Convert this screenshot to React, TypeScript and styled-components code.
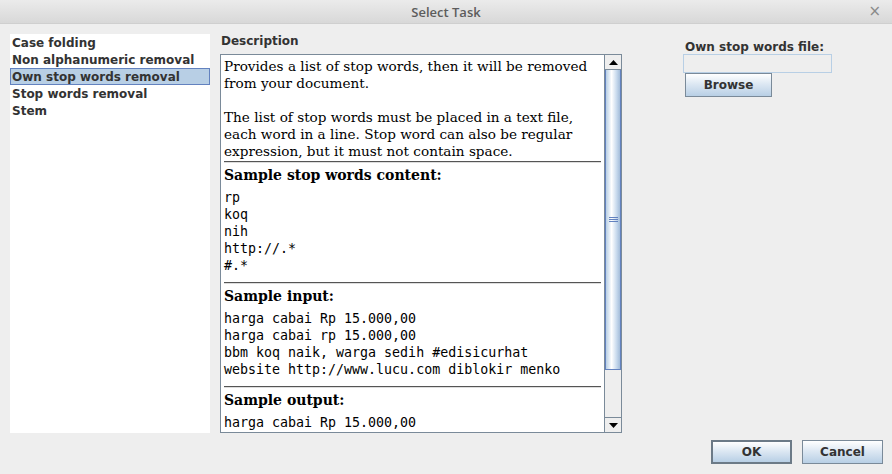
import styled, { createGlobalStyle } from "styled-components";

const GlobalStyle = createGlobalStyle`
  html, body {
    margin: 0;
    padding: 0;
    background: #eeeeee;
    width: 892px;
    height: 474px;
    overflow: hidden;
  }
`;

const tasks = [
  "Case folding",
  "Non alphanumeric removal",
  "Own stop words removal",
  "Stop words removal",
  "Stem",
];

export default function App() {
  return (
    <>
      <GlobalStyle />
      <Window>
        <TitleBar>
          <Title>Select Task</Title>
          <Close>×</Close>
        </TitleBar>
        <Body>
          <TaskList>
            {tasks.map((t) => (
              <TaskItem key={t} selected={t === "Own stop words removal"}>
                {t}
              </TaskItem>
            ))}
          </TaskList>
          <Middle>
            <Label>Description</Label>
            <Pane>
              <Doc>
                <P>
                  Provides a list of stop words, then it will be removed from
                  your document.
                </P>
                <P>
                  The list of stop words must be placed in a text file, each
                  word in a line. Stop word can also be regular expression, but
                  it must not contain space.
                </P>
                <Rule />
                <H>Sample stop words content:</H>
                <Pre>{"rp\nkoq\nnih\nhttp://.*\n#.*"}</Pre>
                <Rule />
                <H>Sample input:</H>
                <Pre>
                  {
                    "harga cabai Rp 15.000,00\nharga cabai rp 15.000,00\nbbm koq naik, warga sedih #edisicurhat\nwebsite http://www.lucu.com diblokir menko"
                  }
                </Pre>
                <Rule />
                <H>Sample output:</H>
                <Pre>{"harga cabai Rp 15.000,00"}</Pre>
              </Doc>
              <ScrollBar>
                <ArrowButton>
                  <svg width="9" height="5" viewBox="0 0 9 5">
                    <path d="M0 5 L4.5 0 L9 5 Z" fill="#000" />
                  </svg>
                </ArrowButton>
                <Track>
                  <Thumb>
                    <Grip />
                  </Thumb>
                </Track>
                <ArrowButton>
                  <svg width="9" height="5" viewBox="0 0 9 5">
                    <path d="M0 0 L4.5 5 L9 0 Z" fill="#000" />
                  </svg>
                </ArrowButton>
              </ScrollBar>
            </Pane>
          </Middle>
          <Side>
            <SideLabel>Own stop words file:</SideLabel>
            <FileField />
            <Button>Browse</Button>
          </Side>
        </Body>
        <Footer>
          <Button wide primary>
            OK
          </Button>
          <Button wide>Cancel</Button>
        </Footer>
      </Window>
    </>
  );
}

const Window = styled.div`
  width: 892px;
  height: 474px;
  display: flex;
  flex-direction: column;
  background: #eeeeee;
`;

const TitleBar = styled.div`
  height: 24px;
  flex: none;
  display: flex;
  align-items: center;
  justify-content: center;
  position: relative;
  background: linear-gradient(#ebebeb, #d8d8d8);
  border-bottom: 1px solid #cfcfcf;
  box-sizing: border-box;
`;

const Title = styled.div`
  font-family: "Open Sans", "Noto Sans", sans-serif;
  font-weight: 600;
  font-size: 13px;
  color: #5c5c5c;
`;

const Close = styled.div`
  position: absolute;
  right: 11px;
  top: 2px;
  font-family: "DejaVu Sans", sans-serif;
  font-size: 15px;
  color: #8a8a8a;
`;

const Body = styled.div`
  display: flex;
  padding: 10px 0 0 10px;
  height: 399px;
`;

const TaskList = styled.div`
  width: 200px;
  height: 399px;
  background: #ffffff;
  display: flex;
  flex-direction: column;
`;

const TaskItem = styled.div<{ selected?: boolean }>`
  height: 17px;
  line-height: 16px;
  box-sizing: border-box;
  padding-left: 1px;
  font-family: "DejaVu Sans", sans-serif;
  font-weight: bold;
  font-size: 12px;
  color: #333333;
  background: ${(p) => (p.selected ? "#b8cfe5" : "transparent")};
  border: 1px solid ${(p) => (p.selected ? "#6382bf" : "transparent")};
`;

const Middle = styled.div`
  margin-left: 10px;
  width: 402px;
  display: flex;
  flex-direction: column;
`;

const Label = styled.div`
  height: 20px;
  padding-left: 1px;
  font-family: "DejaVu Sans", sans-serif;
  font-weight: bold;
  font-size: 12px;
  line-height: 14px;
  color: #333333;
`;

const Pane = styled.div`
  height: 379px;
  box-sizing: border-box;
  border: 1px solid #7a8a99;
  background: #ffffff;
  display: flex;
  overflow: hidden;
`;

const Doc = styled.div`
  flex: 1;
  padding: 3px 3px 0 3px;
  overflow: hidden;
`;

const P = styled.p`
  margin: 0 0 17px 0;
  font-family: "DejaVu Serif", serif;
  font-size: 13.6px;
  line-height: 17px;
  color: #000000;
  &:last-of-type {
    margin-bottom: 0;
  }
`;

const Rule = styled.div`
  height: 0;
  border-top: 1px solid #555555;
  border-bottom: 1px solid #dddddd;
  margin: 1px 0 3px 0;
`;

const H = styled.div`
  font-family: "DejaVu Serif", serif;
  font-weight: bold;
  font-size: 14px;
  line-height: 18px;
  color: #000000;
`;

const Pre = styled.pre`
  margin: 5px 0 8px 0;
  font-family: "DejaVu Sans Mono", monospace;
  font-size: 13.3px;
  line-height: 17px;
  color: #000000;
  white-space: pre;
`;

const ScrollBar = styled.div`
  width: 16px;
  flex: none;
  display: flex;
  flex-direction: column;
  background: #eeeeee;
  border-left: 1px solid #7a8a99;
`;

const ArrowButton = styled.div`
  height: 15px;
  flex: none;
  display: flex;
  align-items: center;
  justify-content: center;
  background: #eeeeee;
  box-sizing: border-box;
  border-bottom: 1px solid #7a8a99;
  &:last-child {
    border-bottom: none;
    border-top: 1px solid #7a8a99;
  }
`;

const Track = styled.div`
  flex: 1;
  display: flex;
  flex-direction: column;
`;

const Thumb = styled.div`
  height: 300px;
  box-sizing: border-box;
  border: 1px solid #6382bf;
  border-top: none;
  background: linear-gradient(90deg, #b8cfe5, #ffffff 40%, #c8daed 75%, #a3bcd9);
  display: flex;
  align-items: center;
  justify-content: center;
`;

const Grip = styled.div`
  width: 9px;
  height: 5px;
  background: repeating-linear-gradient(#6382bf 0 1px, transparent 1px 2px);
`;

const Side = styled.div`
  margin-left: 61px;
  width: 149px;
  display: flex;
  flex-direction: column;
  align-items: flex-start;
  padding-top: 6px;
`;

const SideLabel = styled.div`
  padding-left: 2px;
  font-family: "DejaVu Sans", sans-serif;
  font-weight: bold;
  font-size: 12px;
  line-height: 14px;
  color: #333333;
`;

const FileField = styled.div`
  width: 149px;
  height: 19px;
  box-sizing: border-box;
  border: 1px solid #b8cfe5;
  background: #eeeeee;
`;

const Button = styled.div<{ wide?: boolean; primary?: boolean }>`
  width: ${(p) => (p.wide ? "81px" : "87px")};
  height: 24px;
  margin-left: ${(p) => (p.wide ? "0" : "2px")};
  box-sizing: border-box;
  border: ${(p) => (p.primary ? "2px solid #6c7a87" : "1px solid #7a8a99")};
  background: linear-gradient(#ffffff, #dde8f3 45%, #b8cfe5);
  display: flex;
  align-items: center;
  justify-content: center;
  font-family: "DejaVu Sans", sans-serif;
  font-weight: bold;
  font-size: 12px;
  color: #333333;
`;

const Footer = styled.div`
  display: flex;
  justify-content: flex-end;
  gap: 10px;
  padding: 7px 9px 0 0;
`;
